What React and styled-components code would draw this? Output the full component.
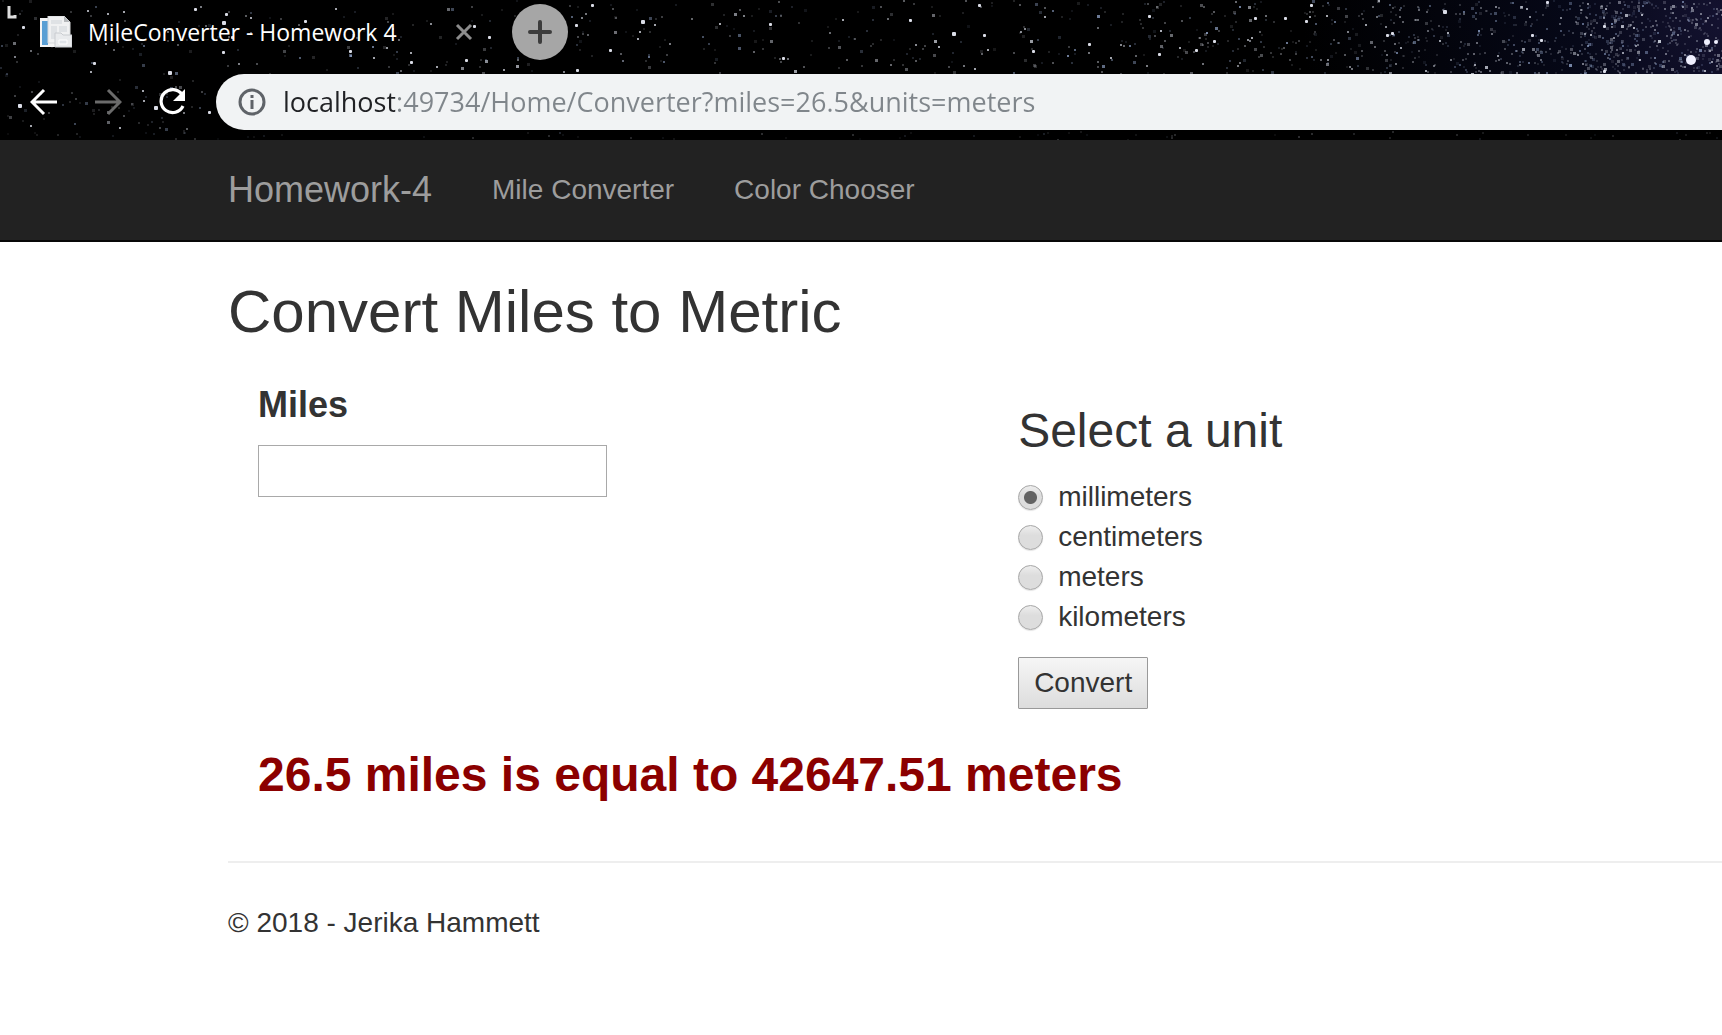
import React, { useState } from "react";
import styled, { createGlobalStyle } from "styled-components";

const GlobalStyle = createGlobalStyle`
  *, *::before, *::after { box-sizing: border-box; }
  body {
    margin: 0;
    background: #fff;
    color: #333;
    font: 28px/40px "Liberation Sans", Arial, sans-serif;
    overflow-x: hidden;
  }
  button, input { font: inherit; color: inherit; }
`;

const Chrome = styled.header`
  position: relative;
  display: flex;
  flex-direction: column;
  gap: 10px;
  padding-bottom: 10px;
  background: #000;
  overflow: hidden;
  font-family: "Open Sans", "Noto Sans", sans-serif;
`;

const Sky = styled.svg`
  position: absolute;
  inset: 0;
  width: 100%;
  height: 100%;
`;

const TabStrip = styled.div`
  position: relative;
  display: flex;
  align-items: center;
  height: 64px;
  padding-left: 40px;
`;

const Tab = styled.div`
  display: flex;
  align-items: center;
  gap: 16px;
  width: 444px;
  color: #fff;
  font-size: 23px;
  line-height: 32px;
`;

const TabTitle = styled.span`
  flex: 1;
  white-space: nowrap;
`;

const IconButton = styled.button`
  display: flex;
  align-items: center;
  justify-content: center;
  width: ${(p) => p.$size}px;
  height: ${(p) => p.$size}px;
  padding: 0;
  border: 0;
  border-radius: 50%;
  background: ${(p) => p.$fill || "transparent"};
  color: ${(p) => p.$color || "#fff"};
`;

const TabClose = styled(IconButton)`
  margin-right: 8px;
`;

const NewTab = styled(IconButton)`
  margin-left: 28px;
`;

const Toolbar = styled.div`
  position: relative;
  display: flex;
  align-items: center;
  padding-left: 16px;
`;

const Navigation = styled.div`
  display: flex;
  gap: 8px;
  width: 200px;
`;

const AddressBar = styled.label`
  flex: 1;
  display: flex;
  align-items: center;
  gap: 17px;
  height: 56px;
  padding-left: 22px;
  border-radius: 28px 0 0 28px;
  background: #f1f3f4;
`;

const Address = styled.input`
  flex: 1;
  min-width: 0;
  height: 40px;
  padding: 0;
  border: 0;
  outline: 0;
  font-size: 27px;
  color: #80868b;
  background: linear-gradient(90deg, #202124 112px, #80868b 112px);
  background-clip: text;
  -webkit-background-clip: text;
  -webkit-text-fill-color: transparent;
`;

const Navbar = styled.nav`
  display: flex;
  align-items: center;
  height: 102px;
  padding-left: 228px;
  gap: 60px;
  background: #222;
  border-bottom: 2px solid #080808;
`;

const NavLink = styled.a`
  color: #9d9d9d;
  text-decoration: none;
  font-size: ${(p) => (p.$brand ? 36 : 28)}px;
  line-height: 40px;
`;

const Page = styled.main`
  padding: 37px 0 40px 228px;
`;

const Title = styled.h2`
  margin: 0 0 20px;
  font-size: 60px;
  line-height: 66px;
  font-weight: 400;
`;

const Form = styled.form`
  display: grid;
  grid-template-columns: 27fr 25fr;
  padding-left: 30px;
`;

const Field = styled.div`
  display: flex;
  flex-direction: column;
  align-items: flex-start;
  gap: 20px;
  padding-top: 20px;
`;

const FieldLabel = styled.label`
  font-size: 36px;
  line-height: 40px;
  font-weight: 700;
`;

const TextBox = styled.input`
  width: 349px;
  height: 52px;
  padding: 2px;
  border: 1px solid #a9a9a9;
  background: #fff;
`;

const Units = styled.fieldset`
  min-width: 0;
  margin: 0;
  padding: 40px 0 0;
  border: 0;
`;

const UnitsTitle = styled.legend`
  float: left;
  width: 100%;
  margin-bottom: 20px;
  padding: 0;
  font-size: 48px;
  line-height: 52px;
`;

const Choice = styled.label`
  clear: both;
  display: flex;
  align-items: center;
  gap: 15px;
`;

const Radio = styled.input`
  appearance: none;
  width: 25px;
  height: 25px;
  margin: 0;
  border: 1px solid #a6a6a6;
  border-radius: 50%;
  background: linear-gradient(#eee, #ddd 40%, #ddd);
  box-shadow: 0 1px 1px #e4e4e4;
  &:checked {
    background: radial-gradient(circle, #636363 6px, transparent 7px),
      linear-gradient(#eee, #ddd 40%, #ddd);
  }
`;

const Submit = styled.button`
  height: 52px;
  margin-top: 20px;
  padding: 0 15px;
  border: 1px solid #999;
  border-radius: 1px;
  background: linear-gradient(#f6f6f6, #ddd);
`;

const Result = styled.h3`
  margin: 40px 0 60px;
  padding-left: 30px;
  color: #8b0000;
  font-size: 48px;
  line-height: 52px;
  font-weight: 700;
`;

const Footer = styled.footer`
  padding-top: 40px;
  border-top: 2px solid #eee;
`;

const Copyright = styled.p`
  margin: 0;
`;

// Small deterministic generator, so the sky is the same on every load.
function makeStars() {
  let seed = 7;
  const next = () => {
    seed = (seed * 16807) % 2147483647;
    return seed / 2147483647;
  };
  const stars = [];
  const add = (count, from, to, low, high) => {
    for (let i = 0; i < count; i += 1) {
      stars.push({
        x: Math.round(from + next() * (to - from)),
        y: Math.round(next() * 73),
        size: next() > 0.8 ? 2 : 1,
        light: low + next() * next() * (high - low),
      });
    }
  };
  add(130, 0, 560, 0.1, 0.8);
  add(200, 560, 1120, 0.1, 0.8);
  add(200, 1120, 1400, 0.1, 0.8);
  add(480, 1380, 1722, 0.1, 0.8);
  add(240, 1580, 1722, 0.1, 0.7);
  for (let i = 0; i < 60; i += 1) {
    stars.push({
      x: Math.round(next() * 210),
      y: Math.round(74 + next() * 64),
      size: next() > 0.8 ? 2 : 1,
      light: 0.1 + next() * next() * 0.5,
    });
  }
  for (let i = 0; i < 70; i += 1) {
    stars.push({
      x: Math.round(next() * 1722),
      y: Math.round(131 + next() * 8),
      size: 1,
      light: 0.05 + next() * 0.15,
    });
  }
  return stars;
}

const STARS = makeStars();

const BRIGHT_STARS = [
  [88, 11, 3], [108, 14, 3], [124, 12, 3], [23, 27, 4], [195, 9, 4], [226, 14, 4],
  [223, 22, 5], [232, 37, 4], [251, 18, 3], [305, 21, 4], [336, 9, 3], [223, 52, 4],
  [350, 51, 4], [374, 58, 3], [94, 63, 4], [91, 72, 3], [169, 72, 5], [411, 62, 4],
  [437, 67, 3], [411, 53, 3], [466, 60, 4], [474, 26, 4], [489, 37, 4], [577, 70, 4],
  [592, 5, 4], [576, 25, 4], [19, 105, 5], [155, 107, 5], [209, 112, 4], [143, 91, 3],
  [31, 126, 3], [120, 128, 3], [144, 101, 3], [642, 21, 5], [655, 25, 3], [640, 32, 3],
  [638, 39, 3], [720, 24, 3], [770, 24, 4], [783, 58, 4], [610, 50, 4], [843, 20, 3],
  [910, 20, 4], [953, 33, 5], [984, 35, 4], [979, 5, 4], [988, 50, 3], [1033, 51, 4],
  [1089, 44, 4], [1111, 58, 3], [1149, 16, 4], [1255, 18, 4], [1285, 18, 4],
  [1306, 21, 4], [1327, 16, 3], [1252, 38, 3], [1214, 41, 4], [1196, 50, 4],
  [1159, 54, 4], [1180, 48, 3], [1444, 11, 5], [1387, 35, 4], [1392, 33, 4],
  [1311, 5, 4], [1448, 33, 3], [1532, 35, 4], [1604, 26, 4], [1604, 71, 4],
  [1642, 15, 3], [1591, 35, 3], [1541, 40, 4], [1640, 60, 3], [1547, 2, 4],
];

const GLOWING_STARS = [
  [1707, 42, 6], [1716, 42, 4], [1691, 60, 10],
];

function StarField() {
  return (
    <Sky aria-hidden="true">
      <defs>
        <radialGradient id="glow" gradientUnits="userSpaceOnUse" cx="1722" cy="20" r="420">
          <stop offset="0" stopColor="#141230" />
          <stop offset="0.35" stopColor="#060818" />
          <stop offset="1" stopColor="#000" />
        </radialGradient>
      </defs>
      <rect width="100%" height="130" fill="url(#glow)" />
      {STARS.map((s, i) => (
        <rect
          key={i}
          x={s.x}
          y={s.y}
          width={s.size + 1}
          height={s.size + 1}
          fill={i % 3 ? "#dfe3ee" : "#9fb4dc"}
          opacity={s.light}
        />
      ))}
      {BRIGHT_STARS.map(([x, y, size], i) => (
        <rect key={i} x={x - 1} y={y - 1} width={size - 1} height={size - 1} rx="1" fill="#f2f4ff" opacity="0.9" />
      ))}
      {GLOWING_STARS.map(([x, y, size], i) => (
        <circle key={i} cx={x} cy={y} r={size / 2} fill="#f0f0ff" />
      ))}
      <path d="M9 6v11h6v-2" fill="none" stroke="#ddd" strokeWidth="3" />
    </Sky>
  );
}

const Favicon = () => (
  <svg width="32" height="32" viewBox="0 0 32 32" aria-hidden="true">
    <path d="M0 2h20v29H0z" fill="#f4f4f4" />
    <path d="M2 5h6v24H2z" fill="#5a9fd4" />
    <path d="M8 0h16l6 6v21H8z" fill="#f0f1f2" stroke="#d6d8da" />
    <path d="M24 0v6h6z" fill="#b5b8bb" />
    <path d="M11 4h11v4H11zM11 10h6v13h-6zM19 10h8v6h-8z" fill="#dfe2e5" />
    <path d="M15 17h6l2 2h9v12H15z" fill="#e9ebed" stroke="#c9ccd0" />
    <path d="M19 24h8v4h-8z" fill="#dfe3e8" stroke="#fff" />
  </svg>
);

const CloseIcon = () => (
  <svg width="18" height="18" viewBox="0 0 18 18" aria-hidden="true">
    <path d="M2 2l14 14M16 2L2 16" stroke="currentColor" strokeWidth="3" />
  </svg>
);

const PlusIcon = () => (
  <svg width="24" height="24" viewBox="0 0 24 24" aria-hidden="true">
    <path d="M12 2v20M2 12h20" stroke="currentColor" strokeWidth="4" strokeLinecap="round" />
  </svg>
);

const ArrowIcon = ({ forward }) => (
  <svg width="28" height="28" viewBox="0 0 28 28" aria-hidden="true">
    <path
      d={forward ? "M1 14h24M14 2l12 12-12 12" : "M27 14H3M14 2L2 14l12 12"}
      fill="none"
      stroke="currentColor"
      strokeWidth="3"
    />
  </svg>
);

const ReloadIcon = () => (
  <svg width="28" height="28" viewBox="0 0 28 28" aria-hidden="true">
    <path d="M24 6.500A11.500 11.500 0 1 0 25 18" fill="none" stroke="currentColor" strokeWidth="3.200" />
    <path d="M27 1v12H15z" fill="currentColor" />
  </svg>
);

const InfoIcon = () => (
  <svg width="28" height="28" viewBox="0 0 28 28" aria-hidden="true">
    <circle cx="14" cy="14" r="12" fill="none" stroke="#5f6368" strokeWidth="3" />
    <path d="M14 12v9M14 7v3" stroke="#5f6368" strokeWidth="3" />
  </svg>
);

const UNITS = ["millimeters", "centimeters", "meters", "kilometers"];

export default function App() {
  const [unit, setUnit] = useState(UNITS[0]);
  return (
    <>
      <GlobalStyle />
      <Chrome>
        <StarField />
        <TabStrip>
          <Tab>
            <Favicon />
            <TabTitle>MileConverter - Homework 4</TabTitle>
            <TabClose type="button" $size={24} $color="#8c8c8c" aria-label="Close tab">
              <CloseIcon />
            </TabClose>
          </Tab>
          <NewTab type="button" $size={56} $fill="#a6a6a6" $color="#3c3c3c" aria-label="New tab">
            <PlusIcon />
          </NewTab>
        </TabStrip>
        <Toolbar>
          <Navigation>
            <IconButton type="button" $size={56} aria-label="Back">
              <ArrowIcon />
            </IconButton>
            <IconButton type="button" $size={56} $color="#6b6b6b" aria-label="Forward">
              <ArrowIcon forward />
            </IconButton>
            <IconButton type="button" $size={56} aria-label="Reload">
              <ReloadIcon />
            </IconButton>
          </Navigation>
          <AddressBar>
            <InfoIcon />
            <Address
              type="text"
              aria-label="Address"
              defaultValue="localhost:49734/Home/Converter?miles=26.5&units=meters"
            />
          </AddressBar>
        </Toolbar>
      </Chrome>
      <Navbar>
        <NavLink href="#home" $brand>Homework-4</NavLink>
        <NavLink href="#converter">Mile Converter</NavLink>
        <NavLink href="#color">Color Chooser</NavLink>
      </Navbar>
      <Page>
        <Title>Convert Miles to Metric</Title>
        <Form onSubmit={(e) => e.preventDefault()}>
          <Field>
            <FieldLabel htmlFor="miles">Miles</FieldLabel>
            <TextBox id="miles" name="miles" type="text" />
          </Field>
          <Units>
            <UnitsTitle>Select a unit</UnitsTitle>
            {UNITS.map((name) => (
              <Choice key={name}>
                <Radio
                  type="radio"
                  name="units"
                  value={name}
                  checked={unit === name}
                  onChange={() => setUnit(name)}
                />
                {name}
              </Choice>
            ))}
            <Submit type="submit">Convert</Submit>
          </Units>
        </Form>
        <Result>26.5 miles is equal to 42647.51 meters</Result>
        <Footer>
          <Copyright>© 2018 - Jerika Hammett</Copyright>
        </Footer>
      </Page>
    </>
  );
}
